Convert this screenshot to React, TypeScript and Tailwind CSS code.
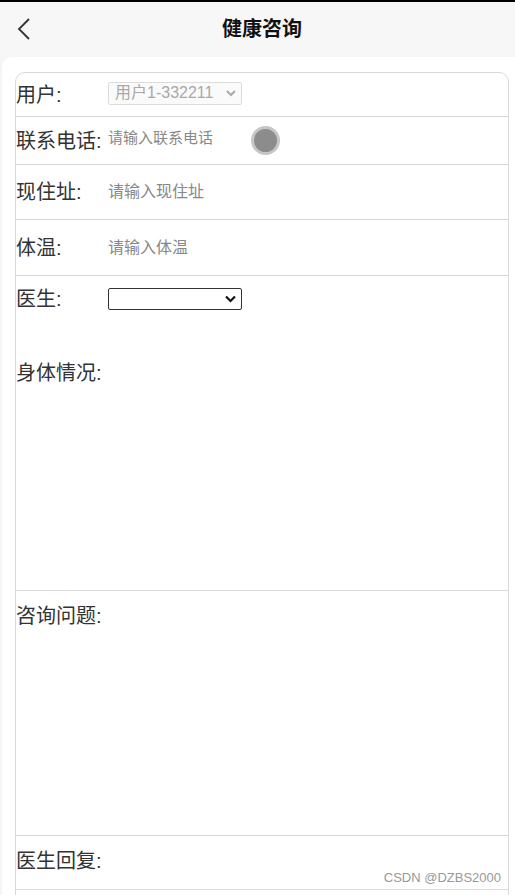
import React from 'react'

const font = { fontFamily: '"Liberation Sans", "Noto Sans CJK SC", sans-serif' }

function Label({ children }: { children: React.ReactNode }) {
  return <span className="w-[92px] shrink-0 text-[20px] leading-none text-[#333]">{children}:</span>
}

export default function App() {
  return (
    <div style={font} className="w-[515px] h-[895px] overflow-hidden bg-[#f5f5f5] border-t-2 border-black">
      {/* header */}
      <div className="relative h-[55px] flex items-center justify-center pl-[9px] bg-[#f7f7f7]">
        <svg className="absolute left-[16px] top-[15px]" width="16" height="24" viewBox="0 0 16 24" fill="none">
          <path d="M13 2 L3 12 L13 22" stroke="#333" strokeWidth="1.8" />
        </svg>
        <h1 className="text-[20px] font-bold text-[#111] -mt-[1px]">健康咨询</h1>
      </div>

      {/* panel */}
      <div className="ml-[2px] h-full bg-white rounded-tl-[10px] pt-[15px] pl-[13px] pr-[6px]">
        <div className="border border-[#d9d9d9] rounded-t-[10px]">
          <div className="h-[44px] flex items-center border-b border-[#d9d9d9]">
            <Label>用户</Label>
            <div className="w-[134px] h-[23px] -mt-[3px] flex items-center justify-between pl-[6px] pr-[5px] border border-[#dcdcdc] rounded-[2px] bg-[#fafafa] text-[16px] text-[#a8a8a8]">
              <span>用户1-332211</span>
              <svg width="10" height="8" viewBox="0 0 10 8">
                <path d="M1 2 L5 6 L9 2" stroke="#aaa" strokeWidth="2" fill="none" />
              </svg>
            </div>
          </div>

          <div className="h-[48px] flex items-center border-b border-[#d9d9d9]">
            <Label>联系电话</Label>
            <span className="self-start mt-[10px] text-[15px] text-[#888]">请输入联系电话</span>
            <span className="ml-[38px] w-[29px] h-[29px] rounded-full bg-[#8c8c8c] border-[3px] border-[#c6c6c6]" />
          </div>

          <div className="h-[55px] flex items-center border-b border-[#d9d9d9]">
            <Label>现住址</Label>
            <span className="text-[16px] text-[#888]">请输入现住址</span>
          </div>

          <div className="h-[56px] flex items-center border-b border-[#d9d9d9]">
            <Label>体温</Label>
            <span className="text-[16px] text-[#888]">请输入体温</span>
          </div>

          <div className="h-[45px] flex items-center">
            <Label>医生</Label>
            <div className="w-[134px] h-[22px] flex items-center justify-end pr-[5px] border border-[#333] rounded-[2px]">
              <svg width="11" height="8" viewBox="0 0 11 8">
                <path d="M1 1.5 L5.5 6 L10 1.5" stroke="#111" strokeWidth="2.2" fill="none" />
              </svg>
            </div>
          </div>

          <div className="h-[270px] pt-[42px] border-b border-[#d9d9d9]">
            <Label>身体情况</Label>
          </div>

          <div className="h-[245px] pt-[15px] border-b border-[#d9d9d9]">
            <Label>咨询问题</Label>
          </div>

          <div className="relative h-[54px] pt-[15px] border-b border-[#d9d9d9]">
            <Label>医生回复</Label>
            <span className="absolute right-[7px] bottom-[2px] text-[13px] text-[#999]">CSDN @DZBS2000</span>
          </div>
          <div className="h-[20px]" />
        </div>
      </div>
    </div>
  )
}
